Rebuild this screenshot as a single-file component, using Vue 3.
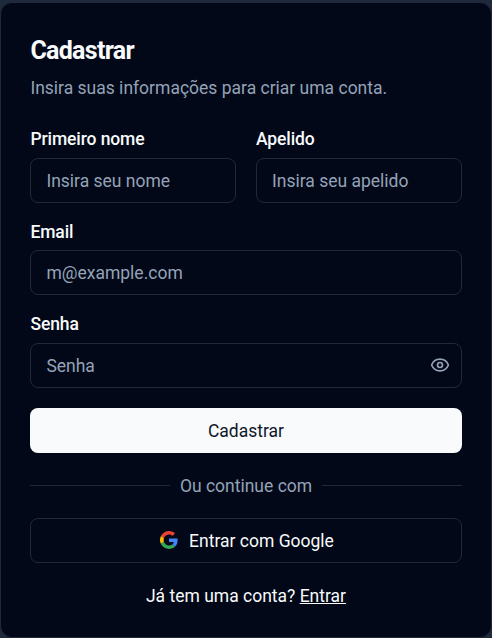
<template>
  <main class="card">
    <header class="head">
      <h1>Cadastrar</h1>
      <p>Insira suas informações para criar uma conta.</p>
    </header>
    <form class="form" @submit.prevent>
      <div class="row">
        <div class="field">
          <label>Primeiro nome</label>
          <input type="text" placeholder="Insira seu nome" />
        </div>
        <div class="field">
          <label>Apelido</label>
          <input type="text" placeholder="Insira seu apelido" />
        </div>
      </div>
      <div class="field">
        <label>Email</label>
        <input type="text" placeholder="m@example.com" />
      </div>
      <div class="field">
        <label>Senha</label>
        <div class="pw">
          <input type="password" placeholder="Senha" />
          <svg class="eye" width="20" height="20" viewBox="0 0 24 24" fill="none" stroke="currentColor" stroke-width="2" stroke-linecap="round" stroke-linejoin="round">
            <path d="M2.06 12.35a1 1 0 0 1 0-.7 10.75 10.75 0 0 1 19.88 0 1 1 0 0 1 0 .7 10.75 10.75 0 0 1-19.88 0" />
            <circle cx="12" cy="12" r="3" />
          </svg>
        </div>
      </div>
      <button class="primary" type="button">Cadastrar</button>
      <div class="divider"><span>Ou continue com</span></div>
      <button class="outline" type="button">
        <svg class="glogo" width="18" height="18" viewBox="0 0 48 48">
          <path fill="#EA4335" d="M24 9.5c3.54 0 6.71 1.22 9.21 3.6l6.85-6.85C35.9 2.38 30.47 0 24 0 14.62 0 6.51 5.38 2.56 13.22l7.98 6.19C12.43 13.72 17.74 9.5 24 9.5z" />
          <path fill="#4285F4" d="M46.98 24.55c0-1.57-.15-3.09-.38-4.55H24v9.02h12.94c-.58 2.96-2.26 5.48-4.78 7.18l7.73 6c4.51-4.18 7.09-10.36 7.09-17.65z" />
          <path fill="#FBBC05" d="M10.53 28.59c-.48-1.45-.76-2.99-.76-4.59s.27-3.14.76-4.59l-7.98-6.19C.92 16.46 0 20.12 0 24c0 3.88.92 7.54 2.56 10.78l7.97-6.19z" />
          <path fill="#34A853" d="M24 48c6.48 0 11.93-2.13 15.89-5.81l-7.73-6c-2.15 1.45-4.92 2.3-8.16 2.3-6.26 0-11.57-4.22-13.47-9.91l-7.98 6.19C6.51 42.62 14.62 48 24 48z" />
        </svg>
        Entrar com Google
      </button>
      <p class="foot">Já tem uma conta? <a href="#">Entrar</a></p>
    </form>
  </main>
</template>

<script setup>
</script>

<style>
html, body { margin: 0; background: #1e293b; overflow: hidden; }
</style>

<style scoped>
* { box-sizing: border-box; }
.card {
  width: 492px;
  height: 636.1px;
  margin-top: 1.9px;
  padding: 30px 29.4px;
  background: #020817;
  border: 1px solid #1e293b;
  border-radius: 12px;
  font-family: Roboto, "Noto Sans", sans-serif;
  color: #f8fafc;
}
.head h1 { margin: 0; font-size: 25px; line-height: 35px; font-weight: 700; letter-spacing: -0.7px; }
.head p { margin: 8px 0 0; font-size: 17.5px; line-height: 25px; color: #94a3b8; }
.form { margin-top: 29.5px; display: flex; flex-direction: column; gap: 20px; }
.row { display: grid; grid-template-columns: 1fr 1fr; gap: 20px; }
.field { display: flex; flex-direction: column; gap: 9.2px; }
label { padding-top: 0.8px; font-size: 17.5px; line-height: 17.5px; font-weight: 500; letter-spacing: -0.1px; }
input {
  width: 100%;
  height: 45px;
  padding: 1px 15px 0;
  background: transparent;
  border: 1px solid #1e293b;
  border-radius: 8px;
  color: #f8fafc;
  font: 17.5px Roboto, sans-serif;
  outline: none;
}
input::placeholder { color: #94a3b8; }
.pw { position: relative; }
.eye { position: absolute; right: 12px; top: 12px; color: #94a3b8; }
button {
  height: 45px;
  padding-top: 2px;
  border-radius: 8px;
  font: 400 17.5px Roboto, sans-serif;
  display: flex;
  align-items: center;
  justify-content: center;
  gap: 11px;
}
.glogo { margin-top: -1px; }
.primary { background: #f8fafc; color: #0f172a; border: 0; }
.outline { background: transparent; color: #f8fafc; border: 1px solid #1e293b; padding-left: 8px; }
.divider { display: flex; align-items: center; gap: 10px; color: #94a3b8; font-size: 17.5px; line-height: 25px; }
.divider span { padding-top: 1px; margin-bottom: -1px; }
.divider::before, .divider::after { content: ""; flex: 1; height: 1px; background: #1e293b; }
.foot { margin: 0; padding-top: 1px; text-align: center; font-size: 17.5px; line-height: 25px; }
.foot a { color: inherit; text-decoration: underline; }
</style>
